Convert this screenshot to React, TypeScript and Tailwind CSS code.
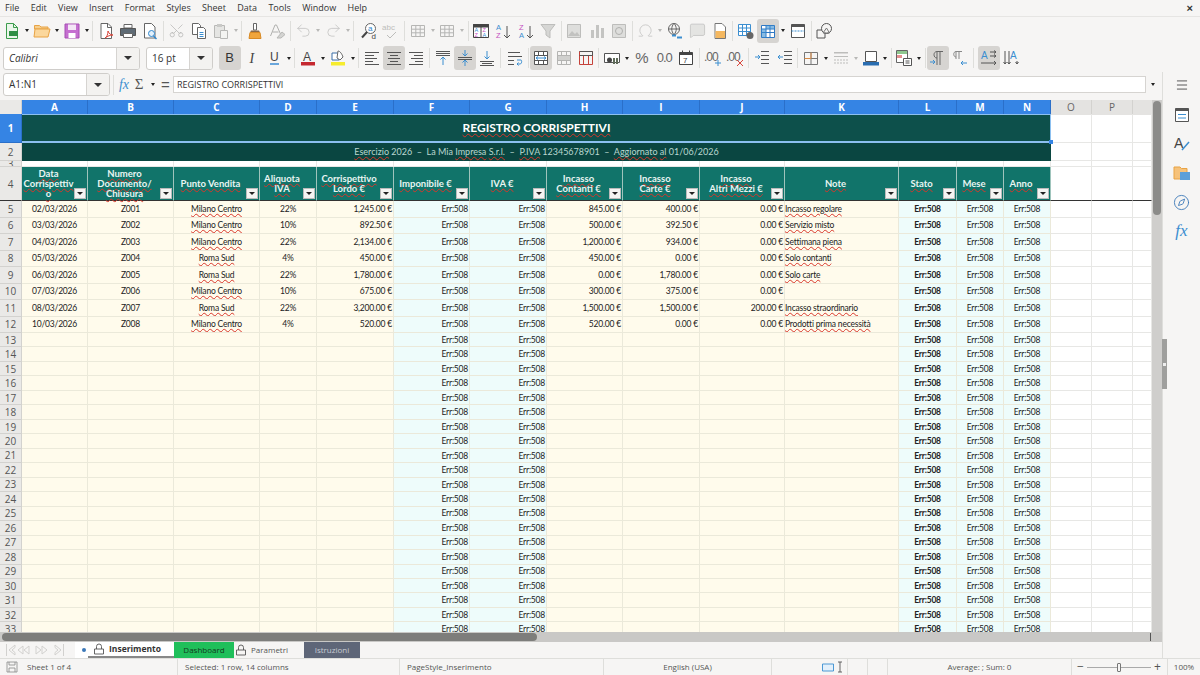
import React from 'react';
import { Menu, Scissors, Undo2, Redo2, Omega, MessageSquare, Compass } from 'lucide-react';

const COLS =
  'grid grid-cols-[22px_66px_86px_86px_57px_77px_76px_77px_76px_77px_85px_114px_58px_47px_47px_41px_41px_19px]';

const MENUS = ['File', 'Edit', 'View', 'Insert', 'Format', 'Styles', 'Sheet', 'Data', 'Tools', 'Window', 'Help'];
const LETTERS = ['A', 'B', 'C', 'D', 'E', 'F', 'G', 'H', 'I', 'J', 'K', 'L', 'M', 'N'];

const HEADERS = [
  ['Data', 'Corrispettiv', 'o'],
  ['Numero', 'Documento/', 'Chiusura'],
  ['Punto Vendita'],
  ['Aliquota', 'IVA'],
  ['Corrispettivo', 'Lordo €'],
  ['Imponibile €'],
  ['IVA €'],
  ['Incasso', 'Contanti €'],
  ['Incasso', 'Carte €'],
  ['Incasso', 'Altri Mezzi €'],
  ['Note'],
  ['Stato'],
  ['Mese'],
  ['Anno'],
];

const ROWS = [
  ['02/03/2026', 'Z001', 'Milano Centro', '22%', '1,245.00 €', '845.00 €', '400.00 €', '0.00 €', 'Incasso regolare'],
  ['03/03/2026', 'Z002', 'Milano Centro', '10%', '892.50 €', '500.00 €', '392.50 €', '0.00 €', 'Servizio misto'],
  ['04/03/2026', 'Z003', 'Milano Centro', '22%', '2,134.00 €', '1,200.00 €', '934.00 €', '0.00 €', 'Settimana piena'],
  ['05/03/2026', 'Z004', 'Roma Sud', '4%', '450.00 €', '450.00 €', '0.00 €', '0.00 €', 'Solo contanti'],
  ['06/03/2026', 'Z005', 'Roma Sud', '22%', '1,780.00 €', '0.00 €', '1,780.00 €', '0.00 €', 'Solo carte'],
  ['07/03/2026', 'Z006', 'Milano Centro', '10%', '675.00 €', '300.00 €', '375.00 €', '0.00 €', ''],
  ['08/03/2026', 'Z007', 'Roma Sud', '22%', '3,200.00 €', '1,500.00 €', '1,500.00 €', '200.00 €', 'Incasso straordinario'],
  ['10/03/2026', 'Z008', 'Milano Centro', '4%', '520.00 €', '520.00 €', '0.00 €', '0.00 €', 'Prodotti prima necessità'],
];

const EMPTY_ROWS = Array.from({ length: 21 }, (_, i) => 13 + i);

function Wavy({ children }: { children: React.ReactNode }) {
  return <span className="underline decoration-[#d8362a] decoration-wavy decoration-1 underline-offset-[0.5px]">{children}</span>;
}

function S({ children }: { children: React.ReactNode }) {
  return (
    <svg viewBox="0 0 18 18" className="h-[18px] w-[18px]" fill="none" strokeWidth={1}>
      {children}
    </svg>
  );
}

function Btn({ children, active }: { children: React.ReactNode; active?: boolean }) {
  return (
    <div className={`flex h-[24px] w-[22.3px] shrink-0 items-center justify-center rounded-[3px] ${active ? 'bg-[#d6d4d1]' : ''}`}>
      {children}
    </div>
  );
}

function Caret({ off }: { off?: boolean }) {
  return (
    <div className="flex w-[7.5px] shrink-0 justify-center">
      <div className={`h-0 w-0 border-x-[2.5px] border-t-[3px] border-x-transparent ${off ? 'border-t-[#b8b8b6]' : 'border-t-[#222]'}`} />
    </div>
  );
}

function Sep() {
  return <div className="mx-[1.5px] h-[20px] w-px shrink-0 bg-[#dededb]" />;
}

function Combo({ label, italic, box }: { label: string; italic?: boolean; box: string }) {
  return (
    <div className={`flex h-[23px] shrink-0 overflow-hidden rounded-[3px] border border-[#cfcdca] bg-white ${box}`}>
      <div className={`flex flex-1 items-center pl-[5px] text-[10px] text-[#333] ${italic ? 'italic' : ''}`}>{label}</div>
      <div className="flex w-[23px] items-center justify-center border-l border-[#d6d4d1] bg-[#f3f2f0]">
        <div className="h-0 w-0 border-x-[4px] border-t-[4px] border-x-transparent border-t-[#333]" />
      </div>
    </div>
  );
}

const gridIcon = (stroke: string) => (
  <S>
    <path d="M2.5 3.5h13v11h-13zM2.5 7.2h13M2.5 10.8h13M6.8 3.5v11M11.2 3.5v11" stroke={stroke} />
  </S>
);

const lines = (ys: number[], x1: number[], x2: number[], c = '#555') => (
  <>
    {ys.map((y, i) => (
      <path key={y} d={`M${x1[i % x1.length]} ${y + 0.5}H${x2[i % x2.length]}`} stroke={c} />
    ))}
  </>
);

function Toolbar1() {
  return (
    <div className="flex h-[27px] items-center pl-px">
      <Btn>
        <S>
          <path d="M3.5 1.5h7l4 4v11h-11z" fill="#eaf6ea" stroke="#3c9c4c" />
          <path d="M6 9h9v5H6z" fill="#2f8f45" />
          <path d="M10.5 1.5v4h4" stroke="#3c9c4c" />
        </S>
      </Btn>
      <Caret />
      <Btn>
        <S>
          <path d="M1.5 5V3.5h5l1.5 1.5h7v2H1.5z" fill="#f6cf8e" stroke="#e8a345" />
          <path d="M1 15 2 7h15l-2 8z" fill="#fbd79c" stroke="#e8a345" />
        </S>
      </Btn>
      <Caret />
      <Btn>
        <S>
          <path d="M2 2h14v14H2z" fill="#c56fd0" stroke="#a64fb3" />
          <path d="M5 2.5h8V8H5z" fill="#f4e6f6" />
          <path d="M5.5 11h7v5h-7z" fill="#fff" />
        </S>
      </Btn>
      <Caret />
      <Sep />
      <Btn>
        <S>
          <path d="M4 1.5h7l3.5 3.5v11.5H4z" fill="#fff" stroke="#666" />
          <path d="M10.5 1.5V5.5h4" stroke="#666" />
          <path d="M8 16c2-1 3-4 3-7 1 3 3 4 5 4-3 0-5 1-8 3z" stroke="#d9453a" />
        </S>
      </Btn>
      <Btn>
        <S>
          <path d="M5 2.5h8V6H5z" fill="#fff" stroke="#666" />
          <path d="M1.5 6.5h15v7h-3v-2h-9v2h-3z" fill="#5f6b75" stroke="#555" />
          <path d="M4.5 11.5h9v4h-9z" fill="#fff" stroke="#666" />
        </S>
      </Btn>
      <Btn>
        <S>
          <path d="M3.5 1.5h7l3.5 3.5v11h-10.500z" fill="#fff" stroke="#666" />
          <circle cx="10.5" cy="11.5" r="3" fill="#e3f0fb" stroke="#2f86cc" />
          <path d="M12.5 14 15.5 17" stroke="#2f86cc" strokeWidth={1.5} />
        </S>
      </Btn>
      <Sep />
      <Btn>
        <Scissors size={17} strokeWidth={1} color="#b4b4b2" className="-rotate-90" />
      </Btn>
      <Btn>
        <S>
          <path d="M2.5 1.5h6l2 2v9h-8z" fill="#fff" stroke="#666" />
          <path d="M7.5 5.5h6l2 2v9h-8z" fill="#fff" stroke="#666" />
          <path d="M9.5 10.5h4M9.5 12.5h4M9.5 14.5h4" stroke="#3b8ed0" />
        </S>
      </Btn>
      <Btn>
        <S>
          <path d="M2.5 3.5h10v12h-10z" fill="#e5e5e3" stroke="#b8b8b6" />
          <path d="M5 2h5v3H5z" fill="#c9c9c7" />
          <path d="M8.5 8.5h7v8h-7z" fill="#f4f4f2" stroke="#b8b8b6" />
        </S>
      </Btn>
      <Caret off />
      <Sep />
      <Btn>
        <S>
          <path d="M7.5 1.5h3V8h-3z" fill="#fff" stroke="#666" />
          <path d="M5 8.5h8l1 2H4z" fill="#8a6a4a" />
          <path d="M4 10.5h10l1 6H3z" fill="#f0a53c" stroke="#d88a25" />
        </S>
      </Btn>
      <Btn>
        <S>
          <path d="M2.5 14 7 3h1.5l4 9M4.5 10h6" stroke="#b0b0ae" />
          <path d="m9 16 5-6 3 2.5-4 3.500z" fill="#d4d4d2" stroke="#b8b8b6" />
        </S>
      </Btn>
      <Sep />
      <Btn>
        <Undo2 size={17} strokeWidth={1} color="#bdbdbb" />
      </Btn>
      <Caret off />
      <Btn>
        <Redo2 size={17} strokeWidth={1} color="#bdbdbb" />
      </Btn>
      <Caret off />
      <Sep />
      <div className="w-[2px] shrink-0" />
      <Btn>
        <S>
          <circle cx="10.5" cy="6.5" r="5" fill="#fff" stroke="#666" />
          <path d="M7 10 2 15.5" stroke="#444" strokeWidth={2} />
          <text x="8" y="9" fontSize="8" fill="#2f86cc" fontFamily="Liberation Sans">a</text>
          <text x="11.5" y="17" fontSize="8" fill="#444" fontFamily="Liberation Sans">d</text>
        </S>
      </Btn>
      <Btn>
        <S>
          <text x="0" y="8" fontSize="8" fill="#bdbdbb" fontFamily="Liberation Sans">abc</text>
          <path d="m5 13 3 3 6-6" stroke="#bdbdbb" />
        </S>
      </Btn>
      <Sep />
      <Btn>{gridIcon('#b6b6b4')}</Btn>
      <Caret off />
      <Btn>{gridIcon('#b6b6b4')}</Btn>
      <Caret off />
      <Sep />
      <Btn>
        <S>
          <path d="M1.5 2.5h15v13h-15z" fill="#fff" stroke="#444" />
          <path d="M1.5 2.5h15V5h-15zM9 5v10.5" fill="#444" stroke="#444" />
          <text x="2.5" y="10" fontSize="5.5" fill="#3b8ed0" fontFamily="Liberation Sans">A</text>
          <text x="2.5" y="15" fontSize="5.5" fill="#c44fc0" fontFamily="Liberation Sans">Z</text>
          <text x="10.5" y="10" fontSize="5.5" fill="#c44fc0" fontFamily="Liberation Sans">Z</text>
          <text x="10.5" y="15" fontSize="5.5" fill="#3b8ed0" fontFamily="Liberation Sans">A</text>
        </S>
      </Btn>
      <Btn>
        <S>
          <text x="2" y="8" fontSize="7.5" fill="#3b8ed0" fontFamily="Liberation Sans">A</text>
          <text x="2" y="16" fontSize="7.5" fill="#c44fc0" fontFamily="Liberation Sans">Z</text>
          <path d="M13 4v12M10 13l3 3 3-3" stroke="#555" />
        </S>
      </Btn>
      <Btn>
        <S>
          <text x="2" y="8" fontSize="7.5" fill="#c44fc0" fontFamily="Liberation Sans">Z</text>
          <text x="2" y="16" fontSize="7.5" fill="#3b8ed0" fontFamily="Liberation Sans">A</text>
          <path d="M13 4v12M10 13l3 3 3-3" stroke="#555" />
        </S>
      </Btn>
      <Btn>
        <S>
          <path d="M2 2.5h14L11 9v7l-4-3V9z" fill="#d6d6d4" stroke="#bdbdbb" />
        </S>
      </Btn>
      <Sep />
      <Btn>
        <S>
          <path d="M2.5 2.5h13v13h-13z" fill="#dededc" stroke="#bdbdbb" />
          <path d="m3 14 4-5 3 3 2-2 3 4z" fill="#c2c2c0" />
        </S>
      </Btn>
      <Btn>
        <S>
          <path d="M3 8h3v8H3zM8 3h3v13H8zM13 6h3v10h-3z" fill="#c4c4c2" />
        </S>
      </Btn>
      <Btn>
        <S>
          <path d="M2.5 2.5h13v13h-13z" fill="#dededc" stroke="#bdbdbb" />
          <circle cx="9" cy="9" r="3.5" stroke="#b0b0ae" />
        </S>
      </Btn>
      <Sep />
      <Btn>
        <Omega size={17} strokeWidth={1} color="#bdbdbb" />
      </Btn>
      <Caret off />
      <Btn>
        <S>
          <circle cx="8" cy="7" r="5.5" stroke="#666" />
          <path d="M2.5 7h11M8 1.5c-3 3-3 8 0 11M8 1.5c3 3 3 8 0 11" stroke="#666" />
          <path d="M6 13.5h4M11 15.5h5" stroke="#3b8ed0" strokeWidth={2} />
        </S>
      </Btn>
      <Btn>
        <MessageSquare size={17} strokeWidth={1} color="#bdbdbb" fill="#e4e4e2" />
      </Btn>
      <Btn>
        <S>
          <path d="M4 1.5h7l3.5 3.5v11.5H4z" fill="#fff" stroke="#777" />
          <path d="M4.5 9H14v7H4.5z" fill="#f5b860" />
        </S>
      </Btn>
      <Sep />
      <Btn>
        <S>
          <path d="M1.5 2.5h12v11h-12z" fill="#fff" stroke="#3b8ed0" />
          <path d="M1.5 6h12M1.5 9.5h12M5.5 2.5v11M9.5 2.5v11" stroke="#3b8ed0" />
          <circle cx="13" cy="13.5" r="3.5" fill="#666" />
        </S>
      </Btn>
      <Btn active>
        <S>
          <path d="M2.5 3.5h13v12h-13z" fill="#fff" stroke="#2f78c4" />
          <path d="M2.5 7h13M2.5 10.5h13M7 3.5v12M11 3.5v12" stroke="#2f78c4" />
          <path d="M2.5 7H7v8.500H2.5zM7 3.5h8.500V7H7z" fill="#3b8ed0" opacity="0.6" />
        </S>
      </Btn>
      <Caret />
      <Btn>
        <S>
          <path d="M2.5 2.5h13v13h-13z" fill="#fff" stroke="#555" />
          <path d="M2.5 2.5h13V5h-13z" fill="#555" />
          <path d="M2.5 9h13" stroke="#3b8ed0" strokeDasharray="2 1" />
        </S>
      </Btn>
      <Sep />
      <Btn>
        <S>
          <path d="M2 8h8v8H2z" stroke="#555" />
          <circle cx="11.5" cy="6.5" r="5" fill="#f6f5f4" stroke="#555" />
          <path d="m8 11 3.5-5 3 5z" stroke="#777" />
        </S>
      </Btn>
    </div>
  );
}

function Toolbar2() {
  const blue = '#3b8ed0';
  return (
    <div className="flex h-[28px] items-center">
      <div className="w-[3px] shrink-0" />
      <Combo label="Calibri" italic box="w-[137px]" />
      <div className="w-[6px] shrink-0" />
      <Combo label="16 pt" box="w-[67px]" />
      <div className="w-[5.5px] shrink-0" />
      <Btn active>
        <span className="font-['Liberation_Sans'] text-[13px] text-[#333]">B</span>
      </Btn>
      <Btn>
        <span className="font-['Liberation_Serif'] text-[14px] text-[#444] italic">I</span>
      </Btn>
      <Btn>
        <span className="border-b-2 border-[#6aa7dc] font-['Liberation_Sans'] text-[12px] leading-[12px] text-[#444]">U</span>
      </Btn>
      <Caret />
      <Sep />
      <Btn>
        <S>
          <text x="4" y="12" fontSize="12" fill="#444" fontFamily="Liberation Sans">A</text>
          <path d="M2 13h14v3.5H2z" fill="#c5282f" />
        </S>
      </Btn>
      <Caret />
      <Btn>
        <S>
          <path d="M3 4h7v7H3z" fill="#fff" stroke="#3b6ea8" />
          <path d="M9 2c2 0 4 3 5 6l-3 3-3-2z" fill="#fff" stroke="#666" />
          <path d="M2 13h14v3.5H2z" fill="#f6ec2e" />
        </S>
      </Btn>
      <Caret />
      <Sep />
      <Btn>
        <S>{lines([3, 6, 9, 12, 15], [2], [16, 11, 14, 10, 16])}</S>
      </Btn>
      <Btn active>
        <S>{lines([3, 6, 9, 12, 15], [2, 5, 3, 5, 2], [16, 13, 15, 13, 16])}</S>
      </Btn>
      <Btn>
        <S>{lines([3, 6, 9, 12, 15], [2, 7, 4, 8, 2], [16])}</S>
      </Btn>
      <Sep />
      <Btn>
        <S>
          {lines([2, 4, 6], [2], [16])}
          <path d="M9 16V8M6.5 10.5 9 8l2.5 2.5" stroke={blue} />
        </S>
      </Btn>
      <Btn active>
        <S>
          {lines([8, 10], [2], [16])}
          <path d="M9 1v6M6.5 4.5 9 7l2.5-2.5M9 17v-6M6.5 13.5 9 11l2.5 2.5" stroke={blue} />
        </S>
      </Btn>
      <Btn>
        <S>
          {lines([12, 14, 16], [2, 4, 2], [16, 14, 16])}
          <path d="M9 2v8M6.5 7.5 9 10l2.5-2.5" stroke={blue} />
        </S>
      </Btn>
      <Sep />
      <div className="w-[1.5px] shrink-0" />
      <Btn>
        <S>
          {lines([3, 7, 11, 15], [2], [14, 16, 8, 8])}
          <path d="M11 11h4c1 0 1 4-1 4h-3M12.5 13.5 11 15l1.5 1.5" stroke={blue} />
        </S>
      </Btn>
      <Sep />
      <Btn active>
        <S>
          <path d="M2.5 2.5h13v13h-13z" fill="#fff" stroke="#555" />
          <path d="M2.5 6.5h13M2.5 11.5h13M6.5 2.5v4M11.5 2.5v4M6.5 11.5v4M11.5 11.5v4" stroke="#555" />
          <path d="M4 9h10M4 9l2-1.5M4 9l2 1.5M14 9l-2-1.5M14 9l-2 1.5" stroke={blue} />
        </S>
      </Btn>
      <Btn>
        <S>
          <path d="M2.5 2.5h13v13h-13zM2.5 6.5h13M2.5 11.5h13M6.5 2.5v4M11.5 2.5v4M6.5 11.5v4M11.5 11.5v4" stroke="#b4b4b2" />
          <path d="M3 7h12v4H3z" fill="#d0d0ce" />
        </S>
      </Btn>
      <Btn>
        <S>
          <path d="M2.5 2.5h13v13h-13zM2.5 6.5h13M6.5 6.5v9M11.5 6.5v9" stroke="#c6423a" />
          <path d="M2.5 2.5h13v4h-13" stroke="#555" />
        </S>
      </Btn>
      <Sep />
      <Btn>
        <S>
          <path d="M1.5 4.5h15v9h-15z" fill="#fff" stroke="#555" />
          <circle cx="6.5" cy="11" r="2.5" fill="#444" />
          <path d="M10 9h2v6h-2zM13 9h2v6h-2z" fill="#5f6b58" />
        </S>
      </Btn>
      <Caret />
      <Btn>
        <span className="font-['Liberation_Sans'] text-[15px] font-light text-[#666]">%</span>
      </Btn>
      <Btn>
        <span className="font-['Liberation_Sans'] text-[13px] tracking-[-1px] text-[#666]">0.0</span>
      </Btn>
      <Btn>
        <S>
          <path d="M2.5 3.5h13v12h-13z" fill="#fff" stroke="#444" />
          <path d="M2.5 3.5h13V6h-13z" fill="#444" />
          <path d="M5.5 1.5v3M12.5 1.5v3" stroke="#444" />
          <text x="6" y="14" fontSize="8" fill="#444" fontFamily="Liberation Sans">7</text>
        </S>
      </Btn>
      <Sep />
      <Btn>
        <S>
          <text x="0" y="12" fontSize="12" letterSpacing="-1" fill="#666" fontFamily="Liberation Sans">.00</text>
          <path d="M14 11v6M11 14h6" stroke={blue} />
        </S>
      </Btn>
      <Btn>
        <S>
          <text x="0" y="12" fontSize="12" letterSpacing="-1" fill="#666" fontFamily="Liberation Sans">.00</text>
          <path d="m11 11 6 6M17 11l-6 6" stroke="#d9453a" />
        </S>
      </Btn>
      <Sep />
      <div className="w-[1px] shrink-0" />
      <Btn>
        <S>
          {lines([2, 6, 10, 14], [8, 8, 8, 8], [16])}
          <path d="M2 8h5M5 6l2 2-2 2" stroke={blue} />
        </S>
      </Btn>
      <Btn>
        <S>
          {lines([2, 6, 10, 14], [8, 8, 8, 8], [16])}
          <path d="M7 8H2M4 6 2 8l2 2" stroke={blue} />
        </S>
      </Btn>
      <Sep />
      <Btn>
        <S>
          <path d="M2.5 3.5h13v12h-13zM9 3.5v12M2.5 9.5h13" stroke="#777" />
          <path d="M9 3.5v6M2.5 9.5H9" stroke="#d88a45" />
        </S>
      </Btn>
      <Caret />
      <Btn>
        <S>
          <path d="M2 3h14v1.5H2zM2 7h14v1H2z" fill="#bdbdbb" />
          <path d="M2 11h14M2 14h14" stroke="#bdbdbb" strokeDasharray="2 1" />
        </S>
      </Btn>
      <Caret off />
      <Btn>
        <S>
          <path d="M3.5 2.5h11v10h-11z" fill="#fff" stroke="#555" />
          <path d="M1 13h16v3.5H1z" fill="#2a6db0" />
        </S>
      </Btn>
      <Caret />
      <Sep />
      <Btn>
        <S>
          <path d="M1.5 1.5h11v12h-11z" fill="#fff" stroke="#666" />
          <path d="M2 2h10v3H2z" fill="#8fc78f" />
          <path d="M2 6h5v3H2z" fill="#e48f8f" />
          <path d="M8.5 9.5h8v7h-8z" fill="#fff" stroke="#555" />
          <path d="M10.5 12h4M10.5 14h4" stroke="#555" />
        </S>
      </Btn>
      <Caret />
      <Sep />
      <Btn active>
        <S>
          <path d="M8 16V2.5h6M11 16V2.5M8 9C4 9 4 2.5 8 2.5" stroke="#666" />
          <path d="M1 13h5M4 11l2 2-2 2" stroke={blue} />
        </S>
      </Btn>
      <Btn>
        <S>
          <path d="M5 10V2.5h6M8 10V2.5M5 8C2 8 2 2.5 5 2.5" stroke="#888" />
          <path d="M10 14h6M12 12l-2 2 2 2" stroke={blue} />
        </S>
      </Btn>
      <Sep />
      <div className="w-[2px] shrink-0" />
      <Btn active>
        <S>
          <text x="1" y="10" fontSize="10" fill={blue} fontFamily="Liberation Sans">A</text>
          <path d="M10 3h6M10 7h6M1 14h15M14 12l2 2-2 2M14 1.5 16 3l-2 1.5M14 5.5 16 7l-2 1.5" stroke="#555" />
        </S>
      </Btn>
      <Btn>
        <S>
          <text x="8" y="10" fontSize="10" fill={blue} fontFamily="Liberation Sans">A</text>
          <path d="M3 2v13M7 2v13M15 12v3M1.5 13 3 15l1.5-2M5.5 13 7 15l1.5-2M13.5 13l1.5 2 1.5-2" stroke="#555" />
        </S>
      </Btn>
    </div>
  );
}

function FormulaBar() {
  return (
    <div className="flex h-[28px] items-center pb-[3px]">
      <div className="w-[3px] shrink-0" />
      <Combo label="A1:N1" box="w-[107px]" />
      <div className="ml-[3px] h-[20px] w-px bg-[#dededb]" />
      <div className="flex w-[20px] justify-center font-['Liberation_Serif'] text-[14px] text-[#3b8ed0] italic">fx</div>
      <div className="flex w-[10px] justify-center font-['Liberation_Serif'] text-[15px] text-[#555]">Σ</div>
      <div className="ml-[5px]">
        <Caret />
      </div>
      <div className="ml-[3px] w-[12px] text-center font-['Liberation_Sans'] text-[15px] leading-[15px] text-[#555]">=</div>
      <div className="ml-[1.5px] flex h-[17px] w-[973px] items-center border border-[#d6d4d1] bg-white pl-[3px] text-[9px] text-[#333]">
        REGISTRO CORRISPETTIVI
      </div>
      <div className="ml-[3px]">
        <Caret />
      </div>
    </div>
  );
}

const gridLine = 'border-r border-b border-[#ebe9da]';
const plainLine = 'border-r border-b border-[#e7e7e5]';

function RowHead({ n, h, active }: { n: number; h?: string; active?: boolean }) {
  return (
    <div
      className={`flex items-center justify-center overflow-hidden border-r border-b font-['Open_Sans'] text-[10px] ${h ?? ''} ${
        active ? 'border-[#2a6fc9] bg-[#3584e4] font-bold text-white' : 'border-[#d3d2cf] bg-[#eae9e7] pt-px text-[#555]'
      }`}
    >
      {n}
    </div>
  );
}

function PlainTail({ line }: { line?: string }) {
  return (
    <>
      <div className={`${plainLine} ${line ?? ''}`} />
      <div className={`${plainLine} ${line ?? ''}`} />
      <div className={`${plainLine} ${line ?? ''}`} />
    </>
  );
}

function Cell({ children, bg, align }: { children?: React.ReactNode; bg: string; align?: string }) {
  return (
    <div className={`flex items-center overflow-hidden pt-px text-[8.5px] tracking-[-0.2px] whitespace-nowrap text-[#222] ${gridLine} ${bg} ${align ?? 'justify-center'}`}>
      {children}
    </div>
  );
}

const CREAM = 'bg-[#fffbec]';
const MINT = 'bg-[#eefcfb]';
const RIGHT = 'justify-end pr-px';

function DataRow({ n, row }: { n: number; row?: string[] }) {
  return (
    <div className={`${COLS} ${row ? 'h-[16.5px]' : 'h-[14.47px]'}`}>
      <RowHead n={n} />
      <Cell bg={CREAM}>{row?.[0]}</Cell>
      <Cell bg={CREAM}>{row?.[1]}</Cell>
      <Cell bg={CREAM}>{row && <Wavy>{row[2]}</Wavy>}</Cell>
      <Cell bg={CREAM}>{row?.[3]}</Cell>
      <Cell bg={CREAM} align={RIGHT}>{row?.[4]}</Cell>
      <Cell bg={MINT} align={RIGHT}>Err:508</Cell>
      <Cell bg={MINT} align={RIGHT}>Err:508</Cell>
      <Cell bg={CREAM} align={RIGHT}>{row?.[5]}</Cell>
      <Cell bg={CREAM} align={RIGHT}>{row?.[6]}</Cell>
      <Cell bg={CREAM} align={RIGHT}>{row?.[7]}</Cell>
      <Cell bg={CREAM} align="justify-start">{row?.[8] && <Wavy>{row[8]}</Wavy>}</Cell>
      <Cell bg={MINT}><b>Err:508</b></Cell>
      <Cell bg={MINT}>Err:508</Cell>
      <Cell bg={MINT}>Err:508</Cell>
      <PlainTail />
    </div>
  );
}

function Sheet() {
  return (
    <div className="h-[532px] flex-1 overflow-hidden bg-white font-['Lato']">
      <div className={`${COLS} h-[14px] font-['Open_Sans'] text-[10px]`}>
        <div className="border-r border-b border-[#d3d2cf] bg-[#eae9e7]" />
        {LETTERS.map((l) => (
          <div key={l} className="flex items-center justify-center border-r border-[#2a6fc9] bg-[#3584e4] font-bold text-white">
            {l}
          </div>
        ))}
        <div className="flex items-center justify-center border-r border-[#d3d2cf] bg-[#e4e3e1] text-[#666]">O</div>
        <div className="flex items-center justify-center border-r border-[#d3d2cf] bg-[#e4e3e1] text-[#666]">P</div>
        <div className="bg-[#e4e3e1]" />
      </div>

      <div className={`${COLS} h-[29px]`}>
        <RowHead n={1} active />
        <div className="relative col-span-14 flex items-center justify-center border-t border-b-2 border-[#8cc0f0] bg-[#0d504b] text-[12px] font-bold text-white">
          <Wavy>REGISTRO CORRISPETTIVI</Wavy>
          <div className="absolute top-0 right-0 bottom-0 w-px bg-[#8cc0f0]" />
          <div className="absolute right-[-2px] bottom-[-3px] h-[4px] w-[4px] bg-[#3584e4]" />
        </div>
        <PlainTail />
      </div>

      <div className={`${COLS} h-[18px]`}>
        <RowHead n={2} />
        <div className="col-span-14 flex items-center justify-center bg-[#0a4641] text-[9px] text-[#b9d7d0]">
          <span className="whitespace-pre">
            <Wavy>Esercizio</Wavy>{' 2026  –  La Mia '}<Wavy>Impresa</Wavy>{' '}<Wavy>S.r.l.</Wavy>{'  –  '}<Wavy>P.IVA</Wavy>{' 12345678901  –  '}<Wavy>Aggiornato</Wavy>{' '}<Wavy>al</Wavy>{' 01/06/2026'}
          </span>
        </div>
        <PlainTail />
      </div>

      <div className={`${COLS} h-[6px]`}>
        <RowHead n={3} />
        {LETTERS.map((l) => (
          <div key={l} className={plainLine} />
        ))}
        <PlainTail />
      </div>

      <div className={`${COLS} h-[34px]`}>
        <RowHead n={4} h="border-b-[#333]" />
        {HEADERS.map((rows, i) => (
          <div
            key={LETTERS[i]}
            className="relative flex flex-col items-center justify-center border-r border-b border-r-[#9fc4bc] border-b-[#333] bg-[#11746a] pr-[12px] text-[9.5px] leading-[10px] font-bold text-[#e8f5f2]"
          >
            {rows.map((t) => (
              <span key={t} className="whitespace-nowrap">
                <Wavy>{t}</Wavy>
              </span>
            ))}
            <div className="absolute right-px bottom-px flex h-[11px] w-[12px] items-center justify-center border border-[#bbb] bg-[#f4f4f2]">
              <div className="h-0 w-0 border-x-[3px] border-t-[3px] border-x-transparent border-t-[#222]" />
            </div>
          </div>
        ))}
        <PlainTail line="border-b-[#333]" />
      </div>

      {ROWS.map((row, i) => (
        <DataRow key={row[1]} n={i + 5} row={row} />
      ))}
      {EMPTY_ROWS.map((n) => (
        <DataRow key={n} n={n} />
      ))}
    </div>
  );
}

function VerticalScroll() {
  return (
    <div className="h-[532px] w-[10px] shrink-0 bg-[#cfcecc] px-px pt-px">
      <div className="h-[114px] rounded-full bg-[#8b8b89]" />
    </div>
  );
}

function NavArrows() {
  return (
    <svg viewBox="0 0 60 14" className="ml-[5px] h-[14px] w-[60px]" fill="none" stroke="#d2d1cf" strokeWidth={1}>
      <path d="M1.5 1v12M10 2 4 7l6 5v-2.500L7 7l3-2.500z" />
      <path d="M18 3l-5 4 5 4zM24 3l-5 4 5 4z" />
      <path d="M31 3l5 4-5 4zM37 3l5 4-5 4z" />
      <path d="M50 2l6 5-6 5V9.500L53 7l-3-2.500zM58.500 1v12" />
    </svg>
  );
}

function Lock() {
  return (
    <svg viewBox="0 0 12 12" className="h-[12px] w-[12px]" fill="none" stroke="#555" strokeWidth={0.9}>
      <path d="M1.5 6h9v5h-9zM3.5 6V3.5a2.5 2.5 0 0 1 5 0V6" />
    </svg>
  );
}

function Tabs() {
  return (
    <div className="flex h-[16px] items-stretch font-['Open_Sans'] text-[8px]">
      <div className="flex w-[75px] items-center">
        <NavArrows />
      </div>
      <div className="flex w-[13px] items-center justify-end bg-white pr-[2px]">
        <div className="h-[4px] w-[4px] rounded-full bg-[#3b78b8]" />
      </div>
      <div className="flex w-[86px] items-center gap-[4px] border-b-2 border-[#888] bg-white pl-[5px] text-[8.5px] font-bold text-[#333]">
        <Lock />
        Inserimento
      </div>
      <div className="flex w-[60px] items-center justify-center bg-[#1fbf5a] text-[#14391f]">Dashboard</div>
      <div className="flex w-[70px] items-center gap-[4px] pl-px text-[#555]">
        <Lock />
        Parametri
      </div>
      <div className="flex w-[56px] items-center justify-center bg-[#5e6678] text-[#c8ccd4]">Istruzioni</div>
    </div>
  );
}

function StatusBar() {
  const cell = 'flex h-full items-center border-r border-[#dededb]';
  return (
    <div className="flex h-[17px] items-center border-t border-[#dededb] font-['Open_Sans'] text-[8px] text-[#555]">
      <div className={`${cell} w-[178px]`}>
        <svg viewBox="0 0 12 12" className="mx-[6px] h-[12px] w-[12px]" fill="none" stroke="#888" strokeWidth={0.8}>
          <path d="M1 1h10v10H1zM3 1v3h6V1M3 11V7h6v4" />
        </svg>
        <span className="ml-[3px]">Sheet 1 of 4</span>
      </div>
      <div className={`${cell} w-[222px] pl-[7px]`}>Selected: 1 row, 14 columns</div>
      <div className={`${cell} w-[204px] pl-[7px]`}>PageStyle_Inserimento</div>
      <div className={`${cell} w-[168px] justify-center`}>English (USA)</div>
      <div className={`${cell} w-[76px] justify-end pr-[2px]`}>
        <svg viewBox="0 0 24 12" className="h-[12px] w-[24px]" fill="none" strokeWidth={0.9}>
          <path d="M1.5 3h11v7h-11z" fill="#e3f0fb" stroke="#3b8ed0" />
          <path d="M17 1h4M17 11h4M19 1v10" stroke="#555" />
        </svg>
      </div>
      <div className={`${cell} w-[20px]`} />
      <div className={`${cell} w-[20px]`} />
      <div className={`${cell} w-[184px] justify-center`}>Average: ; Sum: 0</div>
      <div className={`${cell} w-[96px] gap-[3px] pl-[5px] text-[12px]`}>
        <span>−</span>
        <div className="relative h-px w-[64px] bg-[#aaa]">
          <div className="absolute top-[-4px] left-[30px] h-[9px] w-[4px] rounded-[1px] border border-[#777] bg-[#f6f5f4]" />
        </div>
        <span>+</span>
      </div>
      <div className="flex-1 text-center">100%</div>
    </div>
  );
}

function Sidebar() {
  return (
    <div className="relative flex w-[38px] shrink-0 flex-col items-center border-l border-[#dededb]">
      <div className="absolute top-[267px] left-[-1px] flex h-[50px] w-[5px] items-center justify-center bg-[#9f9f9d]">
        <div className="h-[3px] w-[3px] bg-[#eee]" />
      </div>
      <div className="flex h-[25px] items-center">
        <Menu size={14} strokeWidth={1.5} color="#444" />
      </div>
      <div className="mt-[9px] flex flex-col items-center gap-[11px]">
        <S>
          <path d="M2.5 2.5h13v13h-13z" fill="#fff" stroke="#555" />
          <path d="M2.5 2.5h13V5h-13z" fill="#555" />
          <path d="M5 8.5h8M5 12h8" stroke="#3b8ed0" />
        </S>
        <S>
          <text x="1" y="13" fontSize="14" fill="#444" fontFamily="Liberation Sans">A</text>
          <path d="m9 15 7-8" stroke="#3b8ed0" strokeWidth={1.5} />
        </S>
        <S>
          <path d="M1 3h6l1.5 1.5H14V15H1z" fill="#f6c27a" stroke="#e8a345" />
          <path d="M7 8h10v8H7z" fill="#5c9fd8" />
        </S>
        <div className="flex h-[18px] items-center">
          <Compass size={17} strokeWidth={1.25} color="#3b78b8" />
        </div>
        <span className="font-['Liberation_Serif'] text-[17px] leading-[18px] text-[#3b8ed0] italic">fx</span>
      </div>
    </div>
  );
}

export default function App() {
  return (
    <div className="flex h-[675px] w-[1200px] flex-col overflow-hidden bg-[#f6f5f4] font-['Open_Sans'] text-[#333]">
      <div className="flex h-[17px] items-center border-b border-[#e6e5e3] pl-[5px] text-[9px]">
        <div className="flex gap-[11.4px]">
          {MENUS.map((m) => (
            <span key={m}>{m}</span>
          ))}
        </div>
        <span className="ml-auto pr-[7px] font-['Liberation_Sans'] text-[11px] font-bold">×</span>
      </div>
      <Toolbar1 />
      <Toolbar2 />
      <div className="flex h-[586px]">
        <div className="flex min-w-0 flex-1 flex-col">
          <FormulaBar />
          <div className="flex">
            <Sheet />
            <VerticalScroll />
          </div>
          <div className="flex h-[10px] justify-between bg-[#c9c8c6] py-px pr-[11px] pl-[2px]">
            <div className="h-[8px] w-[535px] rounded-full bg-[#7d7d7b]" />
            <div className="h-[8px] w-px bg-[#555]" />
          </div>
          <Tabs />
        </div>
        <Sidebar />
      </div>
      <StatusBar />
    </div>
  );
}
